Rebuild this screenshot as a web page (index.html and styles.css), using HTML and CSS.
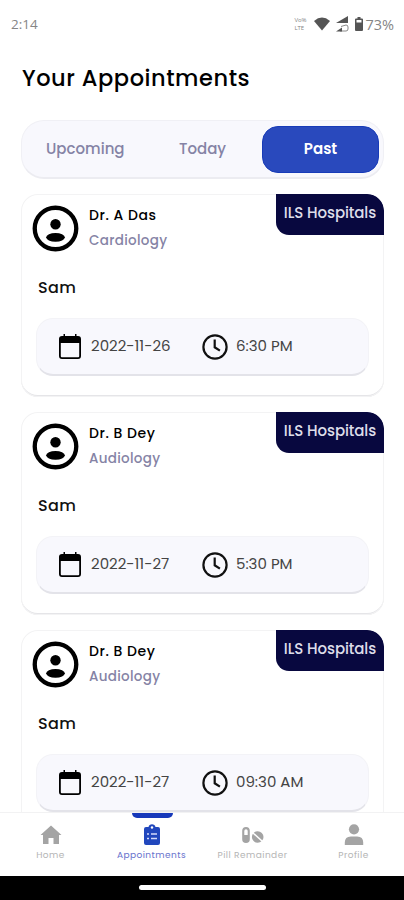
FILE: index.html
```
<!DOCTYPE html>
<html lang="en">
<head>
<meta charset="utf-8">
<meta name="viewport" content="width=device-width, initial-scale=1">
<title>Your Appointments</title>
<link rel="stylesheet" href="styles.css">
</head>
<body>
<svg class="defs" aria-hidden="true">
  <symbol id="person" viewBox="0 0 48 48"><circle cx="24" cy="24" r="21.2" fill="none" stroke="#000" stroke-width="4.4"/><circle cx="24" cy="19.7" r="5.3"/><ellipse cx="24" cy="33" rx="9.5" ry="4.5"/></symbol>
  <symbol id="calendar" viewBox="0 0 24 26"><path d="M4 2h1.500V0H7v2h10V0h1.500v2H20q3 0 3 3v17q0 3-3 3H4q-3 0-3-3V5q0-3 3-3zM2.800 9v13.200q0 1 1 1h16.400q1 0 1-1V9z" fill-rule="evenodd"/></symbol>
  <symbol id="clock" viewBox="0 0 26 26"><g fill="none" stroke="#111" stroke-width="2.2"><circle cx="13" cy="13" r="11.6"/><path d="M12.7 5.5v7.8l5.2 3.3"/></g></symbol>
</svg>
<div class="phone">
  <header class="status">
    <span class="time">2:14</span>
    <div class="indicators">
      <div class="volte"><span>Vo%</span><span>LTE</span></div>
      <svg class="wifi" viewBox="0 0 16 14"><path d="M0 4Q8-2.8 16 4L8 13.5z"/></svg>
      <svg class="signal" viewBox="0 0 13 16"><path d="M12 0v7H0z"/><path d="M5 10.500l5-1.500q2 0 2 2v2q0 2-2 2H4" fill="none" stroke="#888" stroke-width="1"/><path d="M0 15.500l6-4v4z"/></svg>
      <svg class="battery" viewBox="0 0 8 14"><path d="M2.500 0h3v1.500H7q1 0 1 1V13q0 1-1 1H1q-1 0-1-1V2.500q0-1 1-1h1.500zM1.500 3v2.500h5V3z" fill-rule="evenodd"/></svg>
      <span class="percent">73%</span>
    </div>
  </header>
  <main>
    <h1><span>Your Appointments</span></h1>
    <nav class="tabs"><a class="upcoming">Upcoming</a><a class="today">Today</a><a class="past">Past</a></nav>
    <article class="card">
      <div class="top"><svg class="avatar"><use href="#person"/></svg><div class="doctor"><h2>Dr. A Das</h2><p>Cardiology</p></div><div class="badge"><span>ILS Hospitals</span></div></div>
      <h3>Sam</h3>
      <div class="when"><svg class="cal"><use href="#calendar"/></svg><span class="date">2022-11-26</span><svg class="clk"><use href="#clock"/></svg><span class="hour">6:30 PM</span></div>
    </article>
    <article class="card">
      <div class="top"><svg class="avatar"><use href="#person"/></svg><div class="doctor"><h2>Dr. B Dey</h2><p>Audiology</p></div><div class="badge"><span>ILS Hospitals</span></div></div>
      <h3>Sam</h3>
      <div class="when"><svg class="cal"><use href="#calendar"/></svg><span class="date">2022-11-27</span><svg class="clk"><use href="#clock"/></svg><span class="hour">5:30 PM</span></div>
    </article>
    <article class="card">
      <div class="top"><svg class="avatar"><use href="#person"/></svg><div class="doctor"><h2>Dr. B Dey</h2><p>Audiology</p></div><div class="badge"><span>ILS Hospitals</span></div></div>
      <h3>Sam</h3>
      <div class="when"><svg class="cal"><use href="#calendar"/></svg><span class="date">2022-11-27</span><svg class="clk"><use href="#clock"/></svg><span class="hour">09:30 AM</span></div>
    </article>
  </main>
  <nav class="bottom">
    <a><svg viewBox="0 0 22 22"><path d="M11 1.500L21.500 11H19v9h-5.500v-6h-5v6H3v-9H.5z"/></svg><span>Home</span></a>
    <a class="current"><svg viewBox="0 0 22 22"><path d="M5 3h2.500a3.600 3.600 0 017 0H17q2 0 2 2v14q0 2-2 2H5q-2 0-2-2V5q0-2 2-2z"/><circle cx="11" cy="3.500" r="1.200" fill="#fff"/><path d="M6 10h2m2 0h6M6 14.500h2m2 0h6" stroke="#d5dbfa" stroke-width="1.500"/></svg><span>Appointments</span></a>
    <a><svg viewBox="0 0 22 22"><path d="M4 3a3.800 3.800 0 013.800 3.800v8.400a3.800 3.800 0 01-7.600 0V6.800A3.800 3.800 0 014 3zM2.300 7v4h3.400V7a1.700 1.700 0 00-3.400 0z" fill-rule="evenodd"/><circle cx="15.700" cy="13" r="5.800"/><path d="M10.500 8.500l10 9" stroke="#fff" stroke-width="1.500"/></svg><span>Pill Remainder</span></a>
    <a><svg viewBox="0 0 22 22"><circle cx="11" cy="5.300" r="5.100"/><path d="M1.800 21v-2.500q0-6 6-6h6.400q6 0 6 6V21z"/></svg><span>Profile</span></a>
  </nav>
  <footer><i></i></footer>
</div>
</body>
</html>
```
FILE: styles.css
```
* { box-sizing: border-box; margin: 0; padding: 0; }
body { background: #fff; font-family: Poppins, Inter, "Liberation Sans", sans-serif; color: #111; }
.defs { display: none; }
svg { display: block; flex: none; }
span, a, h2, p, h3 { white-space: nowrap; }
.phone { width: 404px; height: 900px; display: flex; flex-direction: column; overflow: hidden; }
.status { height: 48px; flex: none; display: flex; justify-content: space-between; padding: 0 10px 0 11px; align-items: center; color: #858585; font-family: "Open Sans", "Noto Sans", sans-serif; font-size: 13.5px; }
.indicators { display: flex; align-items: center; fill: #555; }
.volte { display: flex; flex-direction: column; font-size: 6.5px; line-height: 7px; width: 20px; gap: 2px; }
.volte span { height: 6px; line-height: 6px; font-size: 6px; }
.wifi { width: 16px; height: 14px; }
.signal { width: 13px; height: 16px; margin-left: 6px; }
.battery { width: 8px; height: 14px; margin: 0 2px 0 6px; }
.percent { font-size: 14.5px; }
main { flex: 1; min-height: 0; overflow: hidden; padding: 0 20px 0 21px; }
h1 { height: 72px; padding: 14px 0 0 1px; line-height: 32px; font-size: 22.5px; font-weight: 500; letter-spacing: .55px; color: #000; }
.tabs { height: 59px; margin-bottom: 15px; display: flex; align-items: center; background: #f8f8fd; border: 1px solid #f0f0f5; border-bottom: 2px solid #ececf1; border-radius: 23px; padding: 0 4px 0 24px; font-size: 15px; font-weight: 500; color: #8583a5; }
.upcoming { width: 133px; padding-bottom: 2px; }
.today { width: 83px; padding-bottom: 2px; }
.past { width: 117px; height: 47px; line-height: 44px; text-align: center; color: #fff; font-weight: 600; background: #2949bd; border: 1px solid #173bb8; border-radius: 16px; }
.card { height: 203px; margin-bottom: 15px; box-shadow: inset 0 0 0 1px #f3f3f4, inset 0 -2px #e5e5e8; border-radius: 17px; overflow: hidden; padding: 0 15px; }
.top { height: 78px; display: flex; margin-right: -15px; }
.avatar { width: 47px; height: 47px; margin: 11px 10px 0 -4px; }
.doctor { flex: 1; padding-top: 10px; }
h2 { font-size: 14px; font-weight: 500; line-height: 22px; color: #000; letter-spacing: .55px; }
p { font-size: 13.5px; font-weight: 500; line-height: 29px; color: #8583a5; letter-spacing: .3px; }
.badge { width: 108px; height: 41px; background: #08083f; color: #dddde9; border-radius: 0 16px 0 13px; font-size: 15px; letter-spacing: -.1px; font-weight: 500; line-height: 38px; text-align: center; }
h3 { height: 46px; padding-left: 2px; line-height: 31px; font-size: 16px; font-weight: 500; letter-spacing: .4px; }
.when { height: 58px; display: flex; align-items: center; background: #f8f8fd; border: 1px solid #f3f3f7; border-bottom: 2px solid #e3e3e9; border-radius: 17px; padding-left: 21px; color: #444; font-size: 15px; }
.cal { width: 24px; height: 26px; }
.date { margin-left: 9px; width: 111px; padding-bottom: 3px; }
.clk { width: 26px; height: 26px; }
.hour { margin-left: 8px; padding-bottom: 3px; }
.bottom { height: 64px; flex: none; display: grid; grid-template-columns: repeat(4, 101px); border-top: 1px solid #f2f2f3; background: #fff; }
.bottom a { display: flex; flex-direction: column; align-items: center; padding-top: 11px; color: #b5b5b5; fill: #a4a4a4; font-size: 9px; line-height: 14px; letter-spacing: .45px; position: relative; }
.bottom svg { width: 22px; height: 22px; margin-bottom: 2px; }
.bottom .current { color: #6872cd; fill: #2147bd; }
.current::before { content: ""; position: absolute; top: 0; left: 31px; width: 41px; height: 5px; border-radius: 0 0 5px 5px; background: #1739ba; }
footer { height: 24px; flex: none; background: #000; display: flex; justify-content: center; padding-top: 9px; }
footer i { width: 127px; height: 5px; border-radius: 3px; background: #fff; }
```
